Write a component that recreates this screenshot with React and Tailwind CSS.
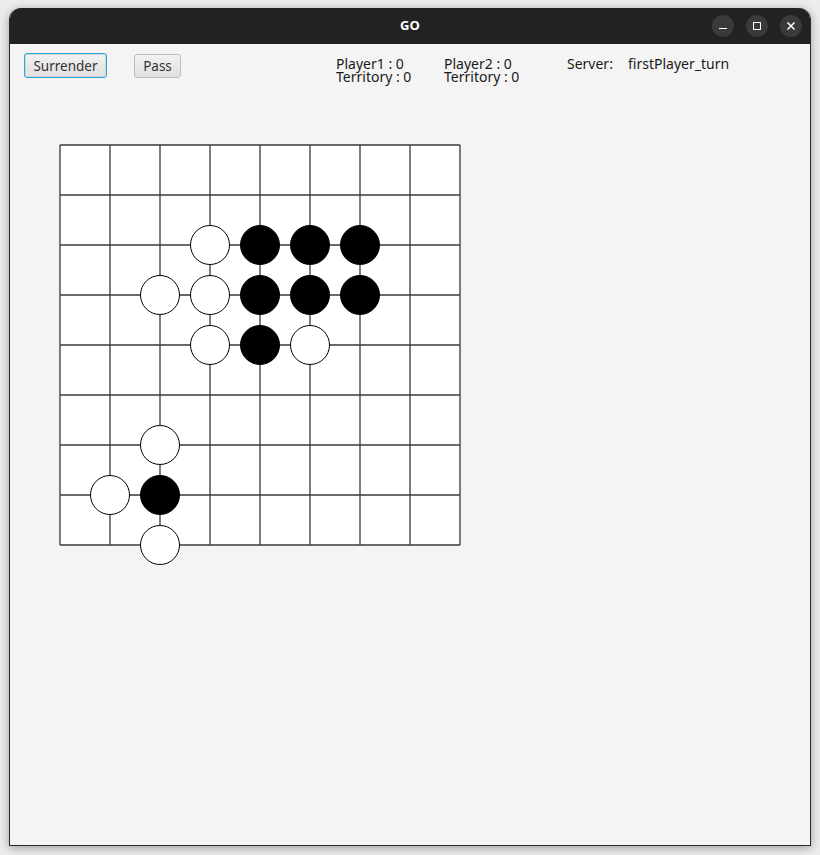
import React from "react";

const CELL = 50;
const SIZE = 8;

// [col, row, color]
const stones = [
    [3, 2, "w"], [4, 2, "b"], [5, 2, "b"], [6, 2, "b"],
    [2, 3, "w"], [3, 3, "w"], [4, 3, "b"], [5, 3, "b"], [6, 3, "b"],
    [3, 4, "w"], [4, 4, "b"], [5, 4, "w"],
    [2, 6, "w"],
    [1, 7, "w"], [2, 7, "b"],
    [2, 8, "w"],
];

const Board = () => {
    const pad = 22;
    const span = CELL * SIZE;
    const lines = [];
    for (let i = 0; i <= SIZE; i++) {
        const p = pad + i * CELL;
        lines.push(<line key={"v" + i} x1={p} y1={pad} x2={p} y2={pad + span} stroke="#3a3a3a" strokeWidth="1.3" />);
        lines.push(<line key={"h" + i} x1={pad} y1={p} x2={pad + span} y2={p} stroke="#3a3a3a" strokeWidth="1.3" />);
    }
    return (
        <svg width={span + pad * 2} height={span + pad * 2} className="block">
            <rect x={pad} y={pad} width={span} height={span} fill="#ffffff" />
            {lines}
            {stones.map(([c, r, col], i) => (
                <circle
                    key={i}
                    cx={pad + c * CELL}
                    cy={pad + r * CELL}
                    r="19.5"
                    fill={col === "b" ? "#000000" : "#ffffff"}
                    stroke="#000000"
                    strokeWidth="1"
                />
            ))}
        </svg>
    );
};

const WinButton = ({ children }) => (
    <div className="w-[22px] h-[22px] rounded-full bg-[#3a3a3a] flex items-center justify-center text-white">
        {children}
    </div>
);

export default function App() {
    return (
        <div className="w-[820px] h-[855px] bg-[#ececec] pt-[8px] pl-[9px]" style={{ fontFamily: "'Noto Sans', sans-serif" }}>
            <div className="w-[802px] h-[838px] flex flex-col rounded-t-[12px] overflow-hidden shadow-[0_2px_10px_rgba(0,0,0,0.35)] border-b border-x border-[#2b2b2b]">
                {/* title bar */}
                <div className="h-[36px] bg-[#222222] flex items-center relative shrink-0">
                    <div className="flex-1 text-center text-white text-[13px] font-bold" style={{ fontFamily: "'Open Sans', sans-serif" }}>GO</div>
                    <div className="absolute right-[8px] top-[7px] flex gap-[12px]">
                        <WinButton>
                            <div className="w-[8px] h-[1.5px] bg-white mt-[5px]" />
                        </WinButton>
                        <WinButton>
                            <div className="w-[8px] h-[8px] border-[1.5px] border-white" />
                        </WinButton>
                        <WinButton>
                            <svg width="10" height="10" viewBox="0 0 10 10">
                                <path d="M1.5 1.5 L8.5 8.5 M8.5 1.5 L1.5 8.5" stroke="#fff" strokeWidth="1.5" />
                            </svg>
                        </WinButton>
                    </div>
                </div>

                {/* content */}
                <div className="flex-1 bg-[#f4f4f4] relative">
                    <div className="flex items-start pt-[9px] pl-[14px] text-[14px] text-[#1a1a1a]">
                        <button className="h-[25px] w-[83px] pt-[2px] rounded-[3px] border border-[#2ba3de] bg-gradient-to-b from-[#f2f2f2] to-[#e0e0e0] text-[#333] text-[13.5px] leading-none shadow-[inset_0_0_0_1px_#d4d4d4]">
                            Surrender
                        </button>
                        <button className="ml-[27px] mt-[1px] h-[24px] w-[47px] pt-[2px] rounded-[3px] border border-[#bdbdbd] bg-gradient-to-b from-[#f2f2f2] to-[#e0e0e0] text-[#333] text-[13.5px] leading-none">
                            Pass
                        </button>
                        <div className="ml-[155px] mt-[4px] leading-[13px] w-[108px]">
                            <div>Player1 : 0</div>
                            <div>Territory : 0</div>
                        </div>
                        <div className="mt-[4px] leading-[13px] w-[123px]">
                            <div>Player2 : 0</div>
                            <div>Territory : 0</div>
                        </div>
                        <div className="mt-[4px] leading-[13px] w-[61px]">Server:</div>
                        <div className="mt-[4px] leading-[13px]">firstPlayer_turn</div>
                    </div>
                    <div className="pl-[28px] pt-[40px]">
                        <Board />
                    </div>
                </div>
            </div>
        </div>
    );
}
